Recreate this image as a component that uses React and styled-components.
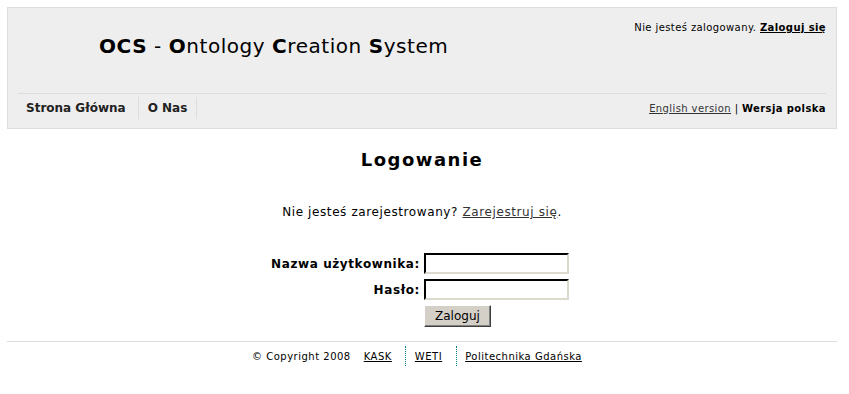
import React from "react";
import styled, { createGlobalStyle } from "styled-components";

const Global = createGlobalStyle`
  html, body { margin: 0; padding: 0; background: #fff; }
  body { font-family: "DejaVu Sans", Verdana, sans-serif; color: #000; }
  #root { padding: 7px 13px 0 7px; }
`;

const Page = styled.div`
  width: 830px;
`;

const Header = styled.header`
  box-sizing: border-box;
  width: 830px;
  height: 122px;
  background: #eee;
  border: 1px solid #ddd;
  display: flex;
  flex-direction: column;
`;

const Top = styled.div`
  height: 85px;
  margin: 0 10px;
  border-bottom: 1px solid #ddd;
  display: flex;
  justify-content: space-between;
  align-items: flex-start;
`;

const Title = styled.h1`
  margin: 26px 0 0 81px;
  font-size: 20px;
  font-weight: normal;
  letter-spacing: 0.55px;
  b { font-weight: bold; }
`;

const Status = styled.div`
  margin-top: 14px;
  font-size: 10px;
  letter-spacing: 0.4px;
`;

const DarkLink = styled.a`
  color: ${p => (p.$muted ? "#333" : "#000")};
  font-weight: ${p => (p.$bold ? "bold" : "normal")};
  text-decoration: underline;
  cursor: pointer;
`;

const NavRow = styled.div`
  margin: 0 10px;
  display: flex;
  justify-content: space-between;
  align-items: center;
  flex: 1;
`;

const Nav = styled.nav`
  display: flex;
  align-self: stretch;
  padding: 3px 0 9px;
`;

const NavItem = styled.a`
  display: flex;
  align-items: center;
  padding: 0 ${p => (p.$first ? "12px" : "9px")} 0 ${p => (p.$first ? "8px" : "9px")};
  border-right: 1px solid #ddd;
  font-size: 12px;
  font-weight: bold;
  color: #222;
  letter-spacing: 0;
`;

const Lang = styled.div`
  font-size: 10px;
  letter-spacing: 0.4px;
  padding-bottom: 6px;
  b { font-weight: bold; }
`;

const Main = styled.main`
  display: flex;
  flex-direction: column;
  align-items: center;
`;

const Heading = styled.h2`
  margin: 20px 0 0;
  font-size: 18px;
  font-weight: bold;
  letter-spacing: 1.5px;
`;

const Register = styled.p`
  margin: 35px 0 0;
  font-size: 12px;
  letter-spacing: 0.6px;
`;

const Form = styled.form`
  margin: 34px 0 0 -4px;
  display: grid;
  grid-template-columns: auto auto;
  column-gap: 4px;
  row-gap: 5px;
  align-items: center;
`;

const Label = styled.label`
  text-align: right;
  font-size: 12px;
  font-weight: bold;
  letter-spacing: 0.6px;
`;

const Input = styled.input`
  box-sizing: border-box;
  width: 145px;
  height: 21px;
  margin: 0;
  border: 2px inset #eee;
  border-top-color: #555;
  border-left-color: #555;
  border-right-color: #dcd9cf;
  border-bottom-color: #dcd9cf;
  background: #fff;
  padding: 1px 3px;
`;

const Button = styled.button`
  grid-column: 2;
  justify-self: start;
  box-sizing: border-box;
  width: 67px;
  height: 22px;
  margin: 0;
  background: #d4d0c8;
  border: 1px solid;
  border-color: #fff #404040 #404040 #fff;
  box-shadow: inset -1px -1px 0 #808080;
  font-family: "DejaVu Sans", Verdana, sans-serif;
  font-size: 12px;
  color: #000;
  padding: 0;
`;

const Footer = styled.footer`
  margin-top: 14px;
  border-top: 1px solid #ddd;
  display: flex;
  justify-content: center;
  padding: 4px 10px 0 0;
  font-size: 10px;
  letter-spacing: 0.5px;
`;

const FootItem = styled.span`
  display: flex;
  align-items: center;
  height: 20px;
  padding: 0 ${p => p.$pr}px 0 ${p => p.$pl}px;
  border-right: ${p => (p.$dotted ? "1px dotted #008080" : "none")};
  a { color: #000; text-decoration: underline; }
`;

export default function App() {
  return (
    <Page>
      <Global />
      <Header>
        <Top>
          <Title>
            <b>OCS</b> - <b>O</b>ntology <b>C</b>reation <b>S</b>ystem
          </Title>
          <Status>
            Nie jesteś zalogowany. <DarkLink $bold>Zaloguj się</DarkLink>
          </Status>
        </Top>
        <NavRow>
          <Nav>
            <NavItem $first>Strona Główna</NavItem>
            <NavItem>O Nas</NavItem>
          </Nav>
          <Lang>
            <DarkLink $muted>English version</DarkLink> | <b>Wersja polska</b>
          </Lang>
        </NavRow>
      </Header>
      <Main>
        <Heading>Logowanie</Heading>
        <Register>
          Nie jesteś zarejestrowany? <DarkLink $muted>Zarejestruj się</DarkLink>.
        </Register>
        <Form onSubmit={e => e.preventDefault()}>
          <Label htmlFor="u">Nazwa użytkownika:</Label>
          <Input id="u" type="text" />
          <Label htmlFor="p">Hasło:</Label>
          <Input id="p" type="password" />
          <Button type="submit">Zaloguj</Button>
        </Form>
      </Main>
      <Footer>
        <FootItem $pl={0} $pr={13}>© Copyright 2008</FootItem>
        <FootItem $pl={0} $pr={13} $dotted><a>KASK</a></FootItem>
        <FootItem $pl={9} $pr={14} $dotted><a>WETI</a></FootItem>
        <FootItem $pl={8} $pr={0}><a>Politechnika Gdańska</a></FootItem>
      </Footer>
    </Page>
  );
}
